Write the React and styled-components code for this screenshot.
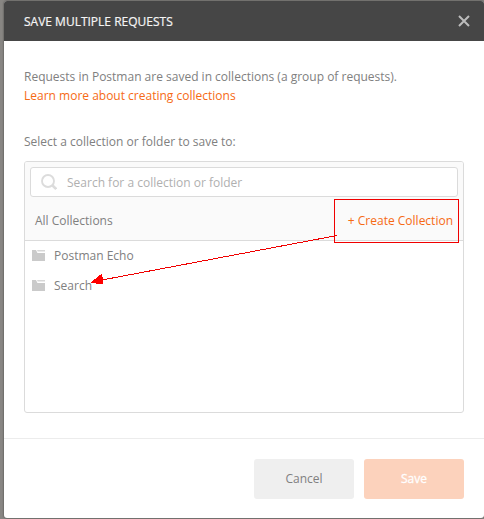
import React from 'react';
import styled, { createGlobalStyle } from 'styled-components';

const GlobalStyle = createGlobalStyle`
  * { box-sizing: border-box; }
  body {
    margin: 0;
    background: #888683;
    overflow: hidden;
    font-family: "Open Sans", sans-serif;
    font-size: 12px;
    line-height: 19px;
    color: #808080;
  }
  button, input { font: inherit; color: inherit; }
`;

const Page = styled.div`
  position: relative;
  width: 484px;
  height: 519px;
  padding: 1px 0 1px 4px;
`;

const Modal = styled.section`
  display: flex;
  flex-direction: column;
  width: 480px;
  height: 517px;
  background: #fff;
  border-radius: 3px;
  overflow: hidden;
  box-shadow: 0 0 2px rgba(0, 0, 0, 0.6);
`;

const Header = styled.header`
  display: flex;
  align-items: center;
  justify-content: space-between;
  height: 40px;
  padding: 0 14px 0 20px;
  background: #464646;
`;

const Title = styled.h1`
  margin: 0;
  font-size: 12px;
  font-weight: 400;
  color: #f4f4f4;
  -webkit-text-stroke: 0.2px #f4f4f4;
`;

const CloseButton = styled.button`
  display: flex;
  padding: 0;
  border: 0;
  background: none;
  color: #bcbcbc;
`;

const Body = styled.div`
  flex: 1;
  padding: 26px 20px 0;
`;

const Intro = styled.p`
  margin: 0;
`;

const Link = styled.a`
  display: block;
  color: #f66a14;
`;

const Label = styled.label`
  display: block;
  margin: 27px 0 10px;
`;

const Picker = styled.div`
  height: 252px;
  border: 1px solid #dbdbdb;
  border-radius: 3px;
  overflow: hidden;
`;

const PickerTop = styled.div`
  height: 79px;
  padding: 5px 5px 0;
  border-bottom: 1px solid #dbdbdb;
  background: #fafafa;
`;

const SearchBox = styled.div`
  display: flex;
  align-items: center;
  gap: 10px;
  height: 30px;
  padding-left: 10px;
  border: 1px solid #dbdbdb;
  border-radius: 3px;
  background: #fff;
`;

const SearchInput = styled.input`
  flex: 1;
  padding: 0;
  border: 0;
  outline: 0;
  background: none;
  &::placeholder { color: #b0b0b0; opacity: 1; }
`;

const Bar = styled.div`
  display: flex;
  justify-content: space-between;
  padding: 14px 5px 0;
`;

const CreateLink = styled.span`
  color: #f66a14;
`;

const List = styled.ul`
  margin: 0;
  padding: 0 0 0 7px;
  list-style: none;
`;

const Row = styled.li`
  display: flex;
  align-items: center;
  gap: 9px;
  height: 30px;
  padding-bottom: 2px;
`;

const Footer = styled.footer`
  display: flex;
  justify-content: flex-end;
  gap: 10px;
  height: 80px;
  padding: 20px 20px 0;
  border-top: 1px solid #ececec;
`;

const Button = styled.button`
  width: 100px;
  height: 40px;
  padding: 0 0 1px;
  border: 0;
  border-radius: 3px;
  background: ${(p) => (p.$primary ? '#fcd2bc' : '#efefef')};
  color: ${(p) => (p.$primary ? '#fff' : '#808080')};
  -webkit-text-stroke: ${(p) => (p.$primary ? '0.3px #fff' : '0')};
`;

const Annotation = styled.svg`
  position: absolute;
  left: 0;
  top: 0;
  pointer-events: none;
`;

const FolderIcon = () => (
  <svg width="13" height="12" viewBox="0 0 13 12" fill="#cacaca">
    <path d="M0 1H4L5.5 4H13V12H0Z" />
    <path d="M5 1H13V2.4H5.7Z" opacity="0.75" />
  </svg>
);

const rows = ['Postman Echo', 'Search'];

export default function App() {
  return (
    <Page>
      <GlobalStyle />
      <Modal>
        <Header>
          <Title>SAVE MULTIPLE REQUESTS</Title>
          <CloseButton aria-label="Close">
            <svg width="12" height="12" viewBox="0 0 12 12" fill="none" stroke="currentColor" strokeWidth="2">
              <path d="M1 1L11 11M11 1L1 11" />
            </svg>
          </CloseButton>
        </Header>
        <Body>
          <Intro>Requests in Postman are saved in collections (a group of requests).</Intro>
          <Link>Learn more about creating collections</Link>
          <Label>Select a collection or folder to save to:</Label>
          <Picker>
            <PickerTop>
              <SearchBox>
                <svg width="16" height="16" viewBox="0 0 16 16" fill="none" stroke="#dcdcdc">
                  <circle cx="7" cy="7" r="6" strokeWidth="1.9" />
                  <path d="M11 11L15.2 15" strokeWidth="2.6" />
                </svg>
                <SearchInput placeholder="Search for a collection or folder" />
              </SearchBox>
              <Bar>
                <span>All Collections</span>
                <CreateLink>+ Create Collection</CreateLink>
              </Bar>
            </PickerTop>
            <List>
              {rows.map((name) => (
                <Row key={name}>
                  <FolderIcon />
                  <span>{name}</span>
                </Row>
              ))}
            </List>
          </Picker>
        </Body>
        <Footer>
          <Button>Cancel</Button>
          <Button $primary>Save</Button>
        </Footer>
      </Modal>
      <Annotation width="484" height="519" viewBox="0 0 484 519">
        <g shapeRendering="crispEdges">
          <rect x="334.5" y="199.5" width="124" height="43" fill="none" stroke="#f00000" />
          <path d="M337 235.5L102 280" stroke="#f00000" />
          <path d="M90.5 282.7L102 273.5L103.5 284.5Z" fill="#ff0000" />
        </g>
      </Annotation>
    </Page>
  );
}
